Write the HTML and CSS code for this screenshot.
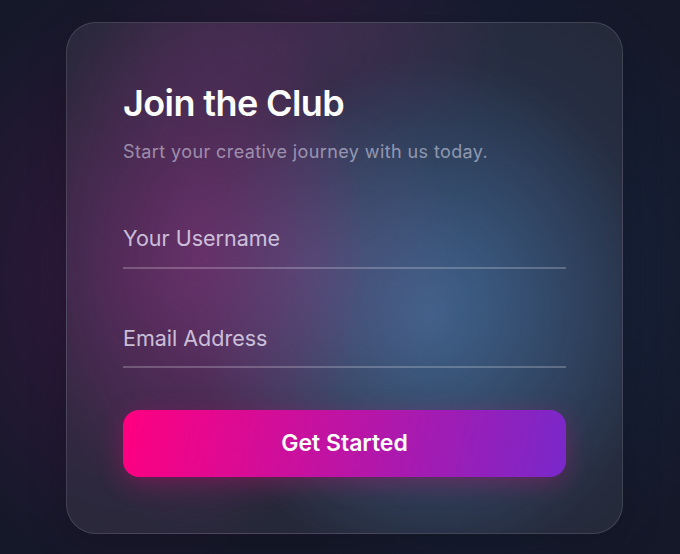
FILE: index.html
```html
<!DOCTYPE html>
<html lang="en">
<head>
  <meta charset="UTF-8" />
  <meta name="viewport" content="width=device-width, initial-scale=1.0"/>
  <title>Join the Club</title>
  <link rel="stylesheet" href="styles.css">
</head>
<body>

  <!-- Signup Card -->
  <div class="card">
    <h1>Join the Club</h1>
    <p class="subtitle">Start your creative journey with us today.</p>

    <form class="signup-form">
      <input type="text" class="field" placeholder="Your Username">
      <input type="email" class="field" placeholder="Email Address">
      <button type="button" class="submit-button">Get Started</button>
    </form>
  </div>

</body>
</html>
```

FILE: styles.css
```css
html, body {
  margin: 0;
  padding: 0;
  width: 100%;
  height: 100%;
  font-family: 'Inter', 'Noto Sans', sans-serif;
  color: #ffffff;
}

body {
  box-sizing: border-box;
  display: flex;
  align-items: center;
  justify-content: center;
  padding: 2px 0 0 9px;
  background:
    radial-gradient(ellipse 35% 55% at 20% 50%, rgba(75, 25, 80, 0.6), transparent 100%),
    radial-gradient(ellipse 30% 25% at 45% 0%, rgba(70, 30, 80, 0.35), transparent 100%),
    radial-gradient(ellipse 40% 60% at 70% 50%, rgba(25, 55, 95, 0.55), transparent 100%),
    #151829;
}

.card {
  box-sizing: border-box;
  width: 557px;
  padding: 59px 56px 56px;
  border-radius: 30px;
  border: 1px solid rgba(255, 255, 255, 0.12);
  background:
    radial-gradient(ellipse 30% 55% at 24% 45%, rgba(125, 50, 120, 0.6), transparent 100%),
    radial-gradient(ellipse 30% 35% at 42% 48%, rgba(120, 90, 150, 0.35), transparent 100%),
    radial-gradient(ellipse 42% 50% at 65% 57%, rgba(80, 125, 175, 0.62), transparent 100%),
    radial-gradient(ellipse 40% 30% at 40% 5%, rgba(100, 50, 110, 0.3), transparent 100%),
    rgba(255, 255, 255, 0.07);
  box-shadow: 0 10px 40px rgba(0, 0, 0, 0.2);
}

.card h1 {
  margin: 0;
  font-size: 36px;
  font-weight: 600;
  line-height: 1.2;
  letter-spacing: -0.6px;
}

.subtitle {
  margin: 13px 0 0;
  font-size: 18px;
  line-height: 1.5;
  letter-spacing: 0.4px;
  color: rgba(225, 225, 245, 0.55);
}

.signup-form {
  display: flex;
  flex-direction: column;
  gap: 42px;
  margin-top: 46px;
}

.field {
  padding: 15px 0;
  border: none;
  border-bottom: 2px solid rgba(255, 255, 255, 0.22);
  background: transparent;
  font-family: inherit;
  font-size: 21.5px;
  line-height: 1.2;
  color: #ffffff;
  outline: none;
}

.field::placeholder {
  color: rgba(235, 230, 250, 0.8);
}

.submit-button {
  padding: 20px;
  border: none;
  border-radius: 16px;
  background: linear-gradient(100deg, #ff0080, #7928ca);
  color: #ffffff;
  font-family: inherit;
  font-size: 23px;
  font-weight: 600;
  line-height: 27px;
  box-shadow: 0 6px 26px rgba(255, 0, 128, 0.28);
  cursor: pointer;
}
```
